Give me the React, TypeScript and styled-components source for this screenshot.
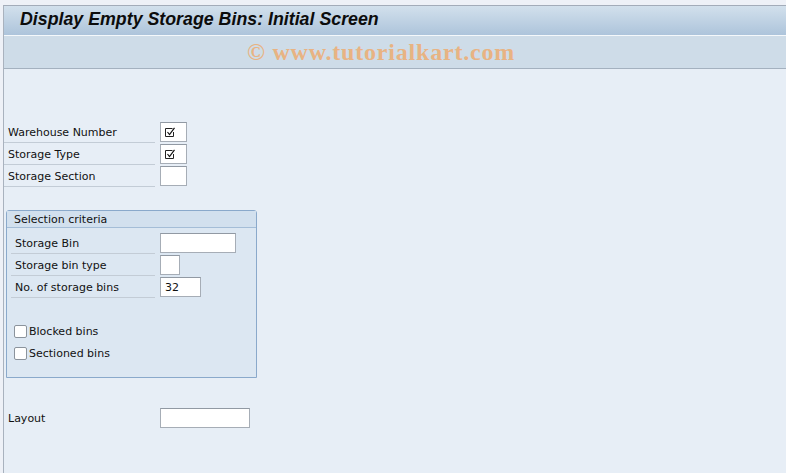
import React from 'react';
import styled, { createGlobalStyle } from 'styled-components';

const GlobalStyle = createGlobalStyle`
  html, body {
    margin: 0;
    padding: 0;
    background: #eef1f7;
  }
  #root {
    height: 473px;
    overflow: hidden;
  }
`;

const Frame = styled.div`
  margin: 5px 0 0 3px;
  border-top: 1px solid #a3acb9;
  border-left: 1px solid #a9b2be;
  background: #e7eef6;
  height: 467px;
  font-family: "DejaVu Sans", Verdana, sans-serif;
  font-size: 11px;
  color: #111;
`;

const TitleBar = styled.div`
  height: 30px;
  border-bottom: 1px solid #f4f8fb;
  background: linear-gradient(#d2e0ec, #adc4db);
  display: flex;
  align-items: center;
  padding: 0 0 2px 16px;
  box-sizing: border-box;
`;

const Title = styled.h1`
  margin: 0;
  font-family: "Liberation Sans", Arial, sans-serif;
  font-style: italic;
  font-weight: bold;
  font-size: 17.8px;
  color: #0c0c0c;
`;

const Toolbar = styled.div`
  height: 32px;
  background: #cedce8;
  border-bottom: 1px solid #a4b1bf;
  display: flex;
  align-items: center;
  justify-content: center;
`;

const Watermark = styled.span`
  font-family: "Liberation Serif", "Times New Roman", serif;
  font-weight: bold;
  font-size: 24px;
  letter-spacing: 0.8px;
  color: #e8b383;
  margin-right: 28px;
`;

const Content = styled.div`
  padding-top: 52px;
  display: flex;
  flex-direction: column;
`;

const Row = styled.div<{ $indent?: number }>`
  display: flex;
  align-items: center;
  height: 22px;
  padding-left: ${p => p.$indent ?? 0}px;
`;

const Label = styled.label<{ $width: number; $plain?: boolean }>`
  width: ${p => p.$width}px;
  box-sizing: border-box;
  height: 22px;
  line-height: 18px;
  padding: 3px 0 0 4px;
  border-bottom: 1px solid ${p => (p.$plain ? 'transparent' : '#c3ccd6')};
  white-space: nowrap;
  margin-right: 5px;
`;

const Field = styled.div<{ $width: number }>`
  width: ${p => p.$width}px;
  height: 20px;
  box-sizing: border-box;
  background: #fff;
  border: 1px solid #a6adb6;
  border-top-color: #9199a3;
  display: flex;
  align-items: center;
  padding-left: 4px;
  font-size: 11px;
`;

const Group = styled.section`
  margin: 23px 0 0 2px;
  width: 251px;
  box-sizing: border-box;
  border: 1px solid #8aa9cb;
  border-radius: 3px 3px 0 0;
  background: #dce7f2;
  padding-bottom: 13px;
`;

const GroupHeader = styled.div`
  height: 16px;
  line-height: 17px;
  padding-left: 7px;
  background: #d2e0ee;
  border-bottom: 1px solid #a4bdd7;
  margin-bottom: 4px;
`;

const Spacer = styled.div`
  height: 22px;
`;

const CheckRow = styled.label`
  display: flex;
  align-items: center;
  height: 22px;
  padding-left: 7px;
  gap: 2px;
`;

const Box = styled.span`
  width: 13px;
  height: 13px;
  box-sizing: border-box;
  border: 1px solid #8b939c;
  border-radius: 2px;
  background: #fff;
`;

const LayoutRow = styled(Row)`
  margin-top: 29px;
`;

const Tick = () => (
  <svg width="11" height="11" viewBox="0 0 11 11">
    <path d="M0.5 1.5 H7.5 M0.5 1.5 V9.5 H8.5 V5" fill="none" stroke="#222" strokeWidth="1" />
    <path d="M2.5 5 L4.5 7.5 L9.5 0.8" fill="none" stroke="#111" strokeWidth="1.2" />
  </svg>
);

const App = () => {
  return (
    <>
      <GlobalStyle />
      <Frame>
        <TitleBar>
          <Title>Display Empty Storage Bins: Initial Screen</Title>
        </TitleBar>
        <Toolbar>
          <Watermark>© www.tutorialkart.com</Watermark>
        </Toolbar>
        <Content>
          <Row>
            <Label $width={151}>Warehouse Number</Label>
            <Field $width={27}><Tick /></Field>
          </Row>
          <Row>
            <Label $width={151}>Storage Type</Label>
            <Field $width={27}><Tick /></Field>
          </Row>
          <Row>
            <Label $width={151}>Storage Section</Label>
            <Field $width={27} />
          </Row>

          <Group>
            <GroupHeader>Selection criteria</GroupHeader>
            <Row $indent={4}>
              <Label $width={144}>Storage Bin</Label>
              <Field $width={76} />
            </Row>
            <Row $indent={4}>
              <Label $width={144}>Storage bin type</Label>
              <Field $width={20} />
            </Row>
            <Row $indent={4}>
              <Label $width={144}>No. of storage bins</Label>
              <Field $width={41}>32</Field>
            </Row>
            <Spacer />
            <CheckRow><Box />Blocked bins</CheckRow>
            <CheckRow><Box />Sectioned bins</CheckRow>
          </Group>

          <LayoutRow>
            <Label as="span" $plain $width={151}>Layout</Label>
            <Field $width={90} />
          </LayoutRow>
        </Content>
      </Frame>
    </>
  );
};

export default App;
